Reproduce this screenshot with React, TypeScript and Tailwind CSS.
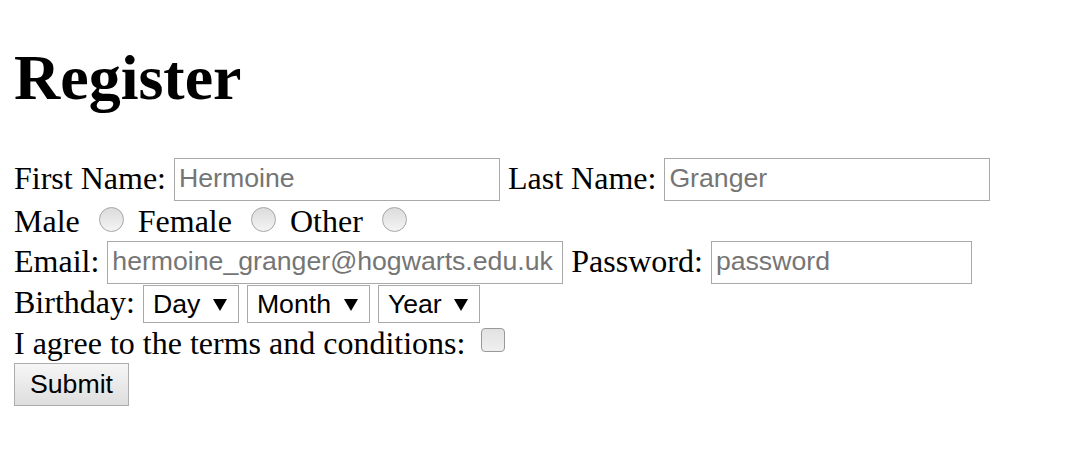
import type React from 'react';

const serif = { fontFamily: '"Liberation Serif", "Times New Roman", serif' };

function TextInput({ placeholder, width }: { placeholder: string; width: string }) {
  return (
    <input
      type="text"
      placeholder={placeholder}
      className={`${width} h-[43px] shrink-0 border border-[#a9a9a9] bg-white pl-[4px] pb-[2px] text-[26.67px] text-black outline-none placeholder:text-[#757575] font-['Liberation_Sans',Arial,sans-serif]`}
    />
  );
}

function Label({ children }: { children: React.ReactNode }) {
  return <span className="mb-[4px]">{children}</span>;
}

function Radio({ className }: { className: string }) {
  return (
    <span
      className={`${className} mb-[4px] block h-[25px] w-[25px] shrink-0 rounded-full border border-[#a6a6a6] bg-gradient-to-b from-[#dcdcdc] to-[#f4f4f4]`}
    />
  );
}

function Select({ label, width }: { label: string; width: string }) {
  return (
    <div
      className={`${width} flex h-[38px] shrink-0 items-center justify-between border border-[#a9a9a9] bg-white pl-[9px] pr-[11px] text-[26.67px] text-black font-['Liberation_Sans',Arial,sans-serif]`}
    >
      <span>{label}</span>
      <svg width="14" height="12" viewBox="0 0 14 12" className="mt-[2px]">
        <path d="M0 0 H14 L7 12 Z" fill="#000" />
      </svg>
    </div>
  );
}

const App: React.FC = () => {
  return (
    <div className="min-h-[452px] w-[1085px] bg-white pl-[14px] pt-[41px] text-[32px] text-black" style={serif}>
      <h1 className="mb-[43px] text-[64px] font-bold leading-[74px]">Register</h1>
      <form className="flex flex-col" onSubmit={(e) => e.preventDefault()}>
        <div className="flex h-[43px] items-center">
          <Label>First Name:</Label>
          <span className="w-[8px]" />
          <TextInput placeholder="Hermoine" width="w-[326px]" />
          <span className="w-[8px]" />
          <Label>Last Name:</Label>
          <span className="w-[8px]" />
          <TextInput placeholder="Granger" width="w-[326px]" />
        </div>
        <div className="flex h-[40px] items-center">
          <span>Male</span>
          <Radio className="ml-[19px] mr-[14px]" />
          <span>Female</span>
          <Radio className="ml-[19px] mr-[14px]" />
          <span>Other</span>
          <Radio className="ml-[19px]" />
        </div>
        <div className="flex h-[43px] items-center">
          <Label>Email:</Label>
          <span className="w-[8px]" />
          <TextInput placeholder="hermoine_granger@hogwarts.edu.uk" width="w-[456px]" />
          <span className="w-[8px]" />
          <Label>Password:</Label>
          <span className="w-[8px]" />
          <TextInput placeholder="password" width="w-[261px]" />
        </div>
        <div className="flex h-[39px] items-center gap-[8px]">
          <Label>Birthday:</Label>
          <Select label="Day" width="w-[96px]" />
          <Select label="Month" width="w-[123px]" />
          <Select label="Year" width="w-[102px]" />
        </div>
        <div className="flex h-[39px] items-center">
          <span>I agree to the terms and conditions:</span>
          <span className="mb-[6px] ml-[16px] block h-[24px] w-[24px] rounded-[4px] border border-[#999999] bg-gradient-to-b from-[#e2e2e2] to-[#efefef]" />
        </div>
        <div className="flex h-[44px] items-center">
          <button
            type="submit"
            className="h-[43px] w-[115px] border border-[#adadad] bg-gradient-to-b from-[#f6f6f6] to-[#dedede] pb-[2px] text-[26.67px] text-black font-['Liberation_Sans',Arial,sans-serif]"
          >
            Submit
          </button>
        </div>
      </form>
    </div>
  );
};

export default App;
